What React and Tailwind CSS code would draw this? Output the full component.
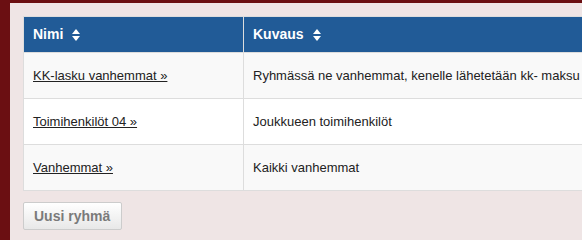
import React from "react";

function SortIcon() {
  return (
    <svg width="8" height="12" viewBox="0 0 8 12" className="ml-[9px] shrink-0">
      <path d="M4 0 L8 5 L0 5 Z" fill="#ffffff" />
      <path d="M4 12 L8 7 L0 7 Z" fill="#ffffff" />
    </svg>
  );
}

const rows = [
  { name: "KK-lasku vanhemmat »", desc: "Ryhmässä ne vanhemmat, kenelle lähetetään kk- maksu" },
  { name: "Toimihenkilöt 04 »", desc: "Joukkueen toimihenkilöt" },
  { name: "Vanhemmat »", desc: "Kaikki vanhemmat" },
];

export default function App() {
  return (
    <div
      className="w-[582px] h-[240px] overflow-hidden bg-[#6b0f12] pl-[10px] pt-[3px]"
      style={{ fontFamily: '"Liberation Sans", Arial, sans-serif' }}
    >
      <div className="w-[800px] h-[300px] bg-[#efe5e5] pl-[13px] pt-[13px]">
        <table className="w-[700px] border-collapse border border-[#dddddd] text-[13px] text-[#222222]">
          <thead>
            <tr className="bg-[#215b97] h-[36px]">
              <th className="w-[220px] text-left font-bold text-[14px] text-white px-[9px] border-r border-[#dddddd]">
                <div className="flex items-center">
                  <span>Nimi</span>
                  <SortIcon />
                </div>
              </th>
              <th className="text-left font-bold text-[14px] text-white px-[9px]">
                <div className="flex items-center">
                  <span>Kuvaus</span>
                  <SortIcon />
                </div>
              </th>
            </tr>
          </thead>
          <tbody>
            {rows.map((r, i) => (
              <tr
                key={r.name}
                className={(i % 2 === 0 ? "bg-[#f9f9f9]" : "bg-white") + " h-[46px] border-t border-[#dddddd]"}
              >
                <td className="px-[9px] border-r border-[#dddddd]">
                  <a href="#" className="underline text-[#222222]">{r.name}</a>
                </td>
                <td className="px-[9px] whitespace-nowrap">{r.desc}</td>
              </tr>
            ))}
          </tbody>
        </table>
        <button className="mt-[11px] h-[28px] w-[99px] border border-[#cccccc] rounded-[2px] bg-gradient-to-b from-white to-[#e8e8e8] text-[14px] font-bold text-[#7a7a7a] text-left pl-[10px]">
          Uusi ryhmä
        </button>
      </div>
    </div>
  );
}
